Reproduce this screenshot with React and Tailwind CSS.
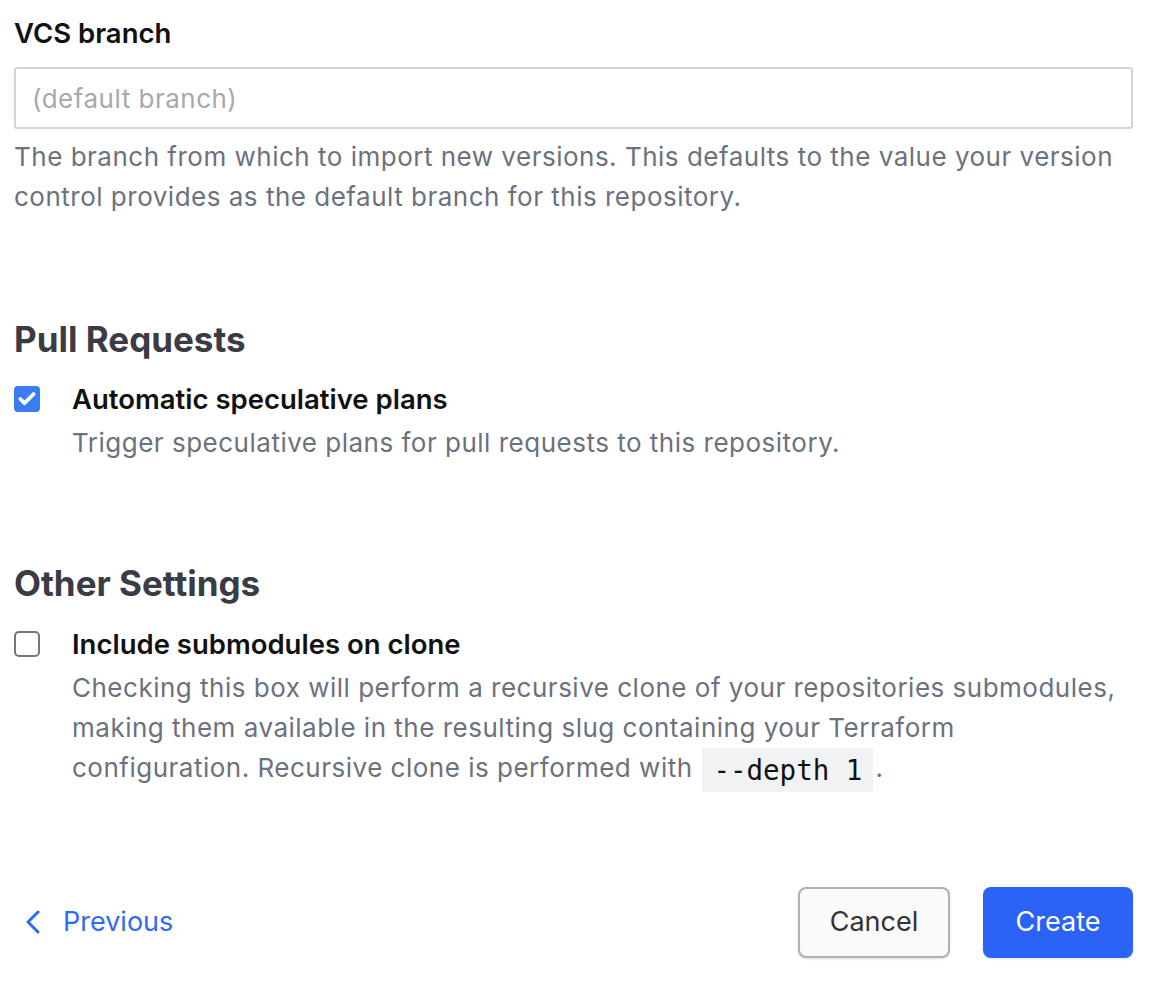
import React from 'react'
import { Check } from 'lucide-react'

const font = { fontFamily: 'Inter, "Noto Sans", sans-serif' }
const mono = { fontFamily: '"DejaVu Sans Mono", "Liberation Mono", monospace' }

const App = () => {
  return (
    <div className="bg-white min-h-[984px] w-[1156px] pl-[14px] pr-[23px] text-[26px] tracking-[0.5px] text-[#6b717d]" style={font}>
      {/* VCS branch */}
      <div className="pt-[16px]">
        <label className="block text-[27.5px] font-semibold text-[#111] tracking-normal leading-[34px]">VCS branch</label>
        <input
          type="text"
          placeholder="(default branch)"
          className="mt-[17px] block w-full h-[62px] border-2 border-[#d4d4d8] rounded-[3px] px-[16px] text-[26px] tracking-[0.5px] placeholder:text-[#a8a8ad] outline-none"
        />
        <p className="mt-[8px] leading-[40px]">
          The branch from which to import new versions. This defaults to the value your version control provides as the default branch for this repository.
        </p>
      </div>

      {/* Pull Requests */}
      <h2 className="mt-[100px] text-[35px] font-bold text-[#3b3b44] tracking-normal leading-[44px]">Pull Requests</h2>
      <div className="mt-[20px] flex">
        <div className="w-[58px] shrink-0 pt-[5px]">
          <div className="w-[26px] h-[26px] rounded-[4px] bg-[#3b7cf6] flex items-center justify-center">
            <Check className="w-[20px] h-[20px] text-white" strokeWidth={4.5} />
          </div>
        </div>
        <div>
          <div className="text-[27.5px] font-semibold text-[#111] tracking-normal leading-[36px]">Automatic speculative plans</div>
          <p className="mt-[6px] leading-[40px]">Trigger speculative plans for pull requests to this repository.</p>
        </div>
      </div>

      {/* Other Settings */}
      <h2 className="mt-[98px] text-[35px] font-bold text-[#3b3b44] tracking-normal leading-[44px]">Other Settings</h2>
      <div className="mt-[21px] flex">
        <div className="w-[58px] shrink-0 pt-[5px]">
          <div className="w-[26px] h-[26px] rounded-[5px] border-2 border-[#767676] bg-white" />
        </div>
        <div>
          <div className="text-[27.5px] font-semibold text-[#111] tracking-normal leading-[36px]">Include submodules on clone</div>
          <p className="mt-[6px] leading-[40px]">
            Checking this box will perform a recursive clone of your repositories submodules, making them available in the resulting slug containing your Terraform configuration. Recursive clone is performed with{' '}
            <code className="inline-block align-middle -my-[2px] mx-[2px] bg-[#f1f2f3] px-[11px] leading-[44px] text-[#111] text-[27.5px] tracking-normal" style={mono}>--depth 1</code>.
          </p>
        </div>
      </div>

      {/* Footer */}
      <div className="mt-[97px] flex items-center justify-between">
        <button className="flex items-center gap-[22px] text-[#2f6bf0] text-[27px] tracking-normal pl-[11px]">
          <svg width="16" height="24" viewBox="0 0 16 24" fill="none" stroke="currentColor" strokeWidth="3" strokeLinecap="round" strokeLinejoin="round">
            <path d="M13 2 3 12l10 10" />
          </svg>
          Previous
        </button>
        <div className="flex gap-[33px]">
          <button className="w-[152px] h-[71px] rounded-[8px] border-2 border-[#b0b0b0] bg-[#fafafa] text-[#333] text-[27px] tracking-normal shadow-sm">Cancel</button>
          <button className="w-[150px] h-[71px] rounded-[8px] bg-[#2b63f6] text-white text-[27px] tracking-normal shadow-sm">Create</button>
        </div>
      </div>
    </div>
  )
}

export default App
